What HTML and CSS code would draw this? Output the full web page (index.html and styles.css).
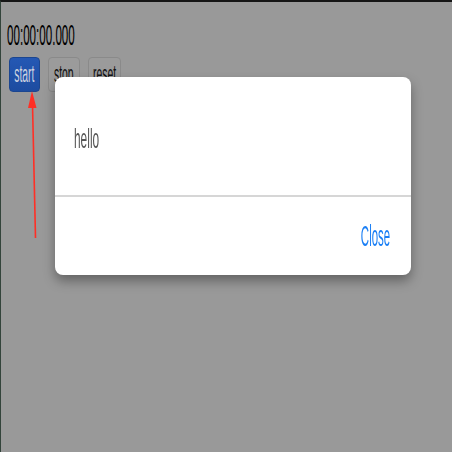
FILE: index.html
```html
<!DOCTYPE html>
<html>
<head>
<meta charset="utf-8">
<link rel="stylesheet" href="styles.css">
</head>
<body>
<div class="page">
  <div class="time"><span class="sq sq-left">00:00:00.000</span></div>
  <div class="controls">
    <button class="btn btn-primary"><span class="sq">start</span></button>
    <button class="btn btn-default btn-stop"><span class="sq">stop</span></button>
    <button class="btn btn-default btn-reset"><span class="sq">reset</span></button>
  </div>
</div>
<div class="modal">
  <div class="modal-body"><span class="sq sq-left">hello</span></div>
  <div class="modal-footer"><span class="sq sq-right close">Close</span></div>
</div>
<svg class="annotation" width="452" height="452" viewBox="0 0 452 452">
  <line x1="35.5" y1="238" x2="32.5" y2="104" stroke="#ff2f25" stroke-width="1.6"/>
  <polygon points="32,91 28,108 36.5,108" fill="#ff2f25"/>
</svg>
</body>
</html>
```

FILE: styles.css
```css
html, body {
  margin: 0;
  padding: 0;
}
body {
  width: 452px;
  height: 452px;
  box-sizing: border-box;
  background: #999999;
  border-top: 2px solid #161616;
  border-left: 1px solid #33443b;
  font-family: "Liberation Sans", Arial, sans-serif;
  overflow: hidden;
}
.page {
  padding: 19px 0 0 6px;
}
.sq {
  display: inline-block;
  white-space: nowrap;
  transform: scaleX(0.45);
  transform-origin: center center;
}
.sq-left { transform-origin: left center; }
.sq-right { transform-origin: right center; }
.time {
  font-size: 29px;
  line-height: 29px;
  height: 29px;
  color: #000;
}
.time .sq { transform: scaleX(0.4); }
.controls {
  display: flex;
  gap: 8px;
  margin-top: 7px;
  padding-left: 2px;
}
.btn {
  height: 35px;
  margin: 0;
  padding: 0;
  border-radius: 4px;
  font-family: "Liberation Sans", Arial, sans-serif;
  font-size: 23px;
  line-height: 23px;
  display: flex;
  align-items: center;
  justify-content: center;
  overflow: visible;
  box-sizing: border-box;
}
.btn-primary {
  width: 31px;
  background: linear-gradient(#2458b4, #1d4ca0);
  border: 1px solid #1c4690;
  color: #cdd3e0;
}
.btn-default {
  background: #9b9b9b;
  border: 1px solid #8a8a8a;
  color: #111;
}
.btn-stop { width: 32px; }
.btn-reset { width: 33px; }
.modal {
  position: fixed;
  left: 55px;
  top: 77px;
  width: 356px;
  height: 198px;
  background: #fff;
  border-radius: 8px;
  box-shadow: 0 6px 12px rgba(0, 0, 0, 0.35);
  display: flex;
  flex-direction: column;
  overflow: hidden;
}
.modal-body {
  height: 118px;
  box-sizing: border-box;
  padding: 48px 0 0 19px;
  font-size: 28px;
  line-height: 28px;
  color: #555;
}
.modal-body .sq { transform: scaleX(0.425); }
.modal-footer {
  border-top: 2px solid #d6d6d6;
  flex: 1;
  box-sizing: border-box;
  padding: 25px 21px 0 0;
  display: flex;
  justify-content: flex-end;
  align-items: flex-start;
  font-size: 29px;
  line-height: 29px;
}
.close {
  color: #1a7ff5;
  transform: scaleX(0.395);
}
.annotation {
  position: fixed;
  left: 0;
  top: 0;
  pointer-events: none;
}
```
